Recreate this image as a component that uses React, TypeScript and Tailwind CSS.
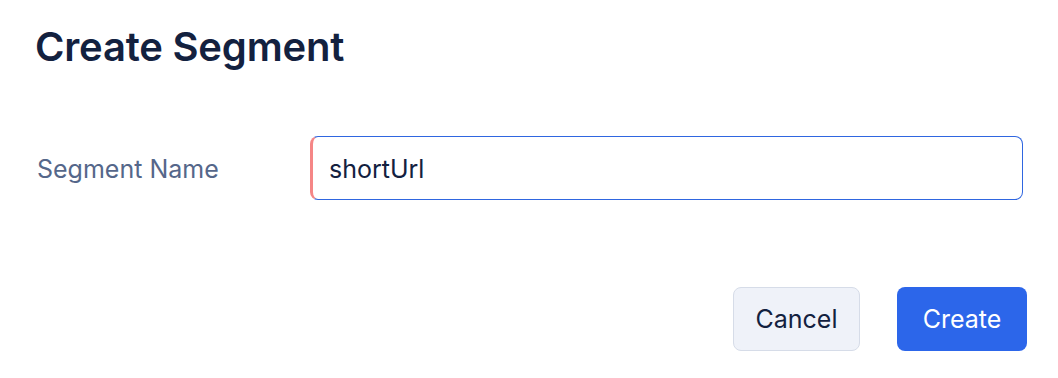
import React, { useState } from 'react';

export default function App() {
  const [name, setName] = useState('shortUrl');

  return (
    <div className="w-[1058px] h-[378px] bg-white font-['Inter',sans-serif] pl-[35px] pr-[31px] pt-[22px]">
      <h1 className="text-[40px] leading-[50px] font-semibold text-[#13213f] tracking-[-0.2px]">Create Segment</h1>

      {/* Name row */}
      <div className="flex items-center mt-[64px] pr-[4px]">
        <label className="w-[275px] text-[25px] text-[#55678a] pl-[2px] pt-[3px]">Segment Name</label>
        <div className="flex-1 h-[64px] rounded-[8px] border border-[#2f66e0] border-l-[3px] border-l-[#f58686] flex items-center pl-[16px] pt-[3px]">
          <input
            value={name}
            onChange={e => setName(e.target.value)}
            className="w-full outline-none text-[25px] text-[#13213f] bg-transparent"
          />
        </div>
      </div>

      {/* Actions */}
      <div className="flex justify-end gap-[37px] mt-[87px]">
        <button className="w-[127px] h-[64px] rounded-[8px] bg-[#eff2f9] border border-[#d6dce8] text-[25px] text-[#13213f] pt-[2px]">
          Cancel
        </button>
        <button className="w-[130px] h-[64px] rounded-[8px] bg-[#2c66ea] text-[25px] text-white pt-[2px]">
          Create
        </button>
      </div>
    </div>
  );
}
